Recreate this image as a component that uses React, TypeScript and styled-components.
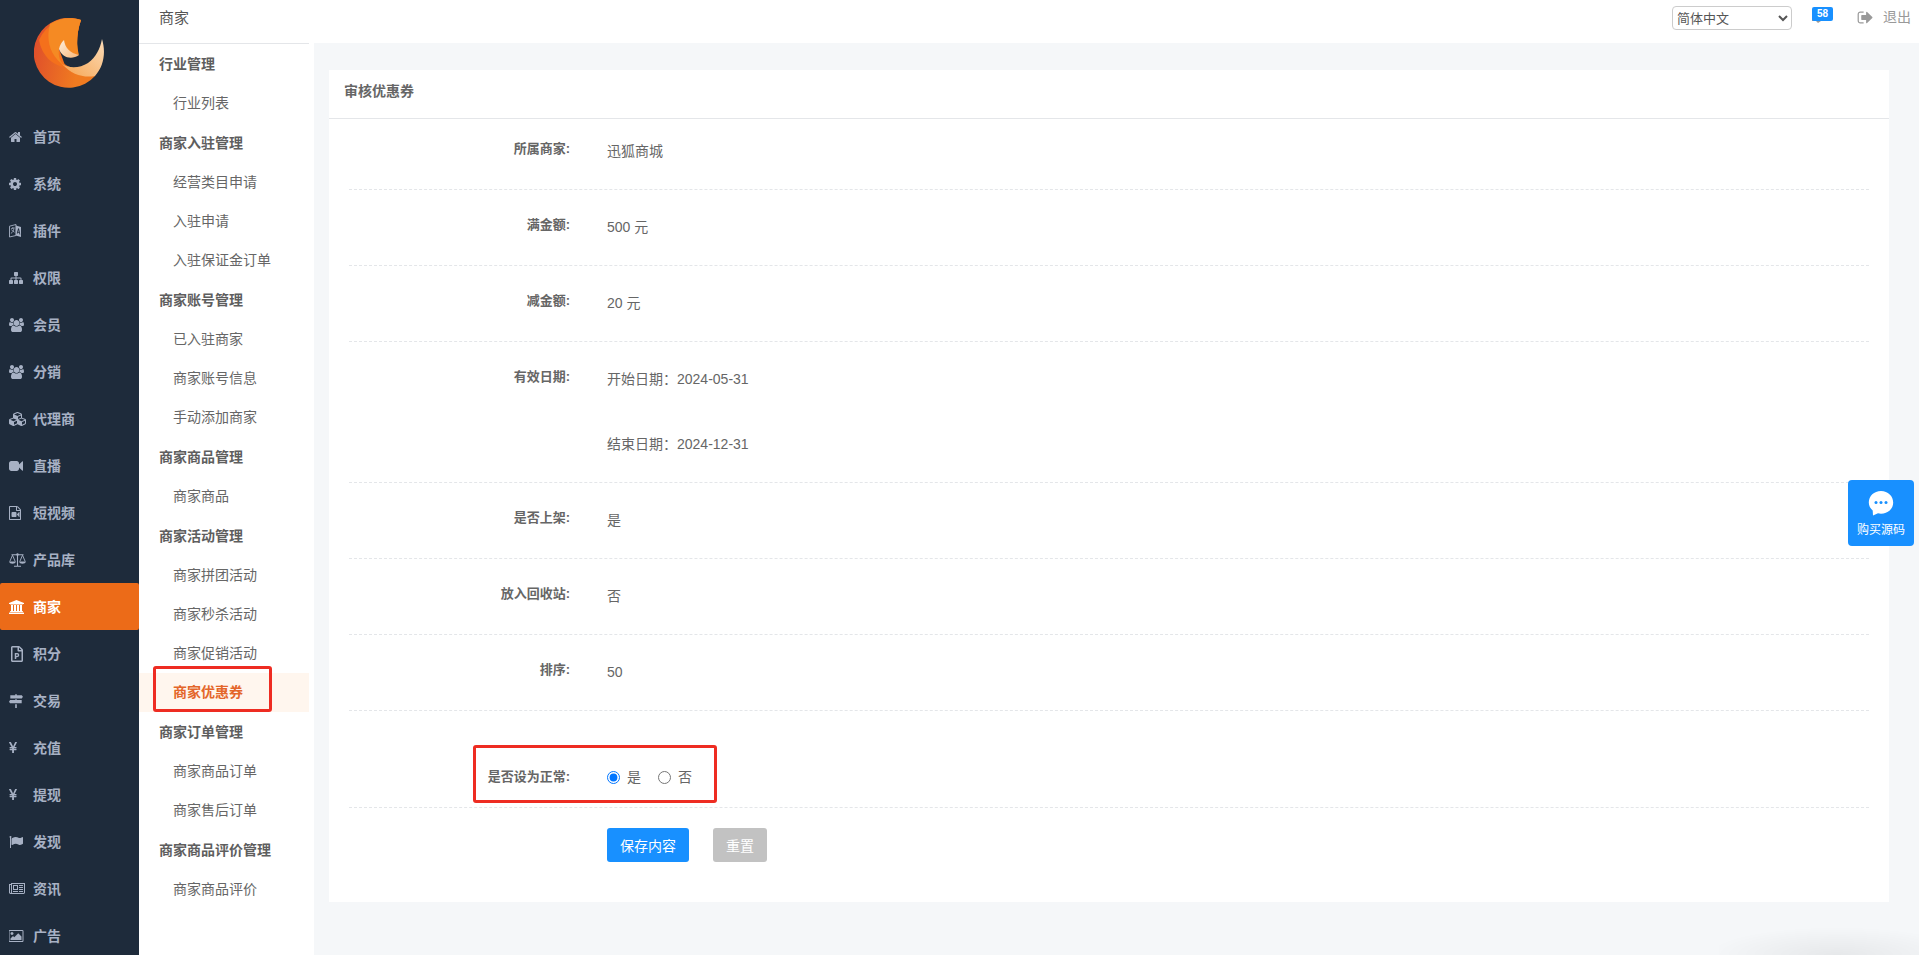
import React from 'react';
import styled, { createGlobalStyle, css } from 'styled-components';
import { FaRegFilePowerpoint } from 'react-icons/fa';

const Global = createGlobalStyle`
  * { box-sizing: border-box; }
  body {
    margin: 0;
    background: #f5f7f9;
    color: #666;
    font: 14px/20px "Liberation Sans", "Noto Sans CJK SC", sans-serif;
  }
  a { color: inherit; text-decoration: none; }
  button, select, input { font-family: inherit; }
`;

const Shell = styled.div`
  display: grid;
  grid-template-columns: 139px 175px minmax(0, 1fr);
  height: 100vh;
  overflow: hidden;
`;

const MainNav = styled.nav`
  background: #1e2b3b;
  overflow: hidden;
`;

const LogoBox = styled.a`
  display: block;
  height: 113px;
  padding: 18px 34px 0;
  svg { display: block; width: 71px; height: 71px; }
`;

const NavLink = styled.a<{ $active?: boolean }>`
  display: flex;
  align-items: center;
  height: 47px;
  padding-left: 9px;
  border-radius: 2px;
  font-weight: bold;
  color: ${p => (p.$active ? '#fff' : '#a7b1c4')};
  background: ${p => (p.$active ? '#ec6b18' : 'transparent')};
`;

const IconSlot = styled.span<{ $tall?: boolean }>`
  display: flex;
  width: 24px;
  svg { display: block; height: ${p => (p.$tall ? 16 : 14)}px; width: auto; fill: currentColor; }
`;

const SubNav = styled.nav`
  background: #fff;
  padding-right: 5px;
  overflow: hidden;
`;

const SubTitle = styled.div`
  height: 44px;
  padding: 8px 20px;
  border-bottom: 1px solid #e4e6e9;
  font-size: 15px;
  color: #555;
`;

const SubGroup = styled.h3`
  margin: 0;
  padding-left: 20px;
  font-size: 14px;
  line-height: 40px;
  color: #5e5e5e;
`;

const SubList = styled.ul`
  margin: 0;
  padding: 0;
  list-style: none;
`;

const SubLink = styled.a<{ $active?: boolean }>`
  display: block;
  position: relative;
  padding-left: 34px;
  line-height: 39px;
  ${p => p.$active && css`
    background: #fff6ee;
    color: #e4662a;
    font-weight: bold;
  `}
`;

const Highlight = styled.span`
  position: absolute;
  inset: -7px 37px 0 14px;
  border: 3px solid #ee2c22;
  border-radius: 3px;
  pointer-events: none;
`;

const Workspace = styled.main`
  display: flex;
  flex-direction: column;
`;

const TopBar = styled.header`
  display: flex;
  align-items: flex-start;
  justify-content: flex-end;
  height: 43px;
  padding: 6px 8px 0 0;
  background: #fff;
`;

const Language = styled.select`
  width: 120px;
  height: 24px;
  border: 1px solid #ccc;
  border-radius: 4px;
  background: #fff;
  color: #555;
  font-size: 13px;
`;

const Messages = styled.a`
  position: relative;
  margin-left: 20px;
  width: 21px;
  height: 22px;
  svg { display: block; width: 14px; height: 14px; margin-top: 4px; fill: #999; }
`;

const Badge = styled.span`
  position: absolute;
  top: 1px;
  left: 0;
  width: 21px;
  border-radius: 2px;
  background: #1890ff;
  color: #fff;
  font-size: 10px;
  font-weight: bold;
  line-height: 14px;
  text-align: center;
`;

const Logout = styled.a`
  display: flex;
  align-items: center;
  gap: 9px;
  margin-left: 24px;
  line-height: 22px;
  color: #999;
  svg { width: 17px; height: 17px; fill: currentColor; }
`;

const Card = styled.section`
  margin: 27px 30px 0 15px;
  padding-bottom: 40px;
  background: #fff;
`;

const CardTitle = styled.h2`
  margin: 0;
  height: 49px;
  padding: 11px 15px;
  border-bottom: 1px solid #e4e6e9;
  font-size: 14px;
  line-height: 20px;
`;

const Form = styled.form`
  padding: 0 20px;
`;

const Row = styled.div<{ $kind?: 'first' | 'choice' }>`
  display: grid;
  grid-template-columns: 221px minmax(0, 1fr);
  column-gap: 37px;
  align-items: start;
  padding: ${p => (p.$kind === 'first' ? '20px 0 28px' : p.$kind === 'choice' ? '56px 0 20px' : '25px 0 28px')};
  border-bottom: 1px dashed #e4e6e9;
`;

const Label = styled.div`
  font-size: 13px;
  font-weight: bold;
  line-height: 20px;
  text-align: right;
`;

const Value = styled.div`
  padding-top: 2px;
  line-height: 20px;
`;

const DateLine = styled.div`
  & + & { margin-top: 45px; }
`;

const Choices = styled.div`
  position: relative;
  display: flex;
  gap: 17px;
`;

const Choice = styled.label`
  display: flex;
  align-items: center;
  gap: 7px;
  line-height: 20px;
  input { width: 13px; height: 13px; margin: 0; accent-color: #0075ff; }
`;

const ChoiceHighlight = styled.span`
  position: absolute;
  inset: -22px auto -16px -134px;
  width: 244px;
  border: 3px solid #ee2c22;
  border-radius: 3px;
  pointer-events: none;
`;

const Actions = styled.div`
  display: flex;
  gap: 24px;
  padding: 20px 0 0 258px;
`;

const Button = styled.button<{ $muted?: boolean }>`
  height: 34px;
  padding: 0 13px;
  border: 0;
  border-radius: 3px;
  background: ${p => (p.$muted ? '#c2c2c2' : '#1890ff')};
  color: #fff;
  font-size: 14px;
`;

const BuyButton = styled.button`
  position: fixed;
  right: 5px;
  top: 480px;
  display: flex;
  flex-direction: column;
  align-items: center;
  gap: 4px;
  width: 66px;
  height: 66px;
  padding: 10px 0 0;
  border: 0;
  border-radius: 4px;
  background: #1890ff;
  color: #fff;
  font-size: 12px;
  line-height: 20px;
  svg { width: 26px; height: 26px; }
`;

const CornerShadow = styled.div`
  position: fixed;
  right: 0;
  bottom: 0;
  width: 200px;
  height: 28px;
  background: radial-gradient(130px 28px at 118px 100%, rgba(0, 0, 0, 0.06), transparent);
  pointer-events: none;
`;

const Glyph = ({ d, box }: { d: string; box: string }) => (
  <svg viewBox={box} aria-hidden="true"><path d={d} /></svg>
);

const home = <Glyph box="64 0 1664 1792" d="M1472 992v480q0 26-19 45t-45 19h-384v-384h-256v384h-384q-26 0-45-19t-19-45v-480q0-1 .5-3t.5-3l575-474 575 474q1 2 1 6zm223-69l-62 74q-8 9-21 11h-3q-13 0-21-7l-692-577-692 577q-12 8-24 7-13-2-21-11l-62-74q-8-10-7-23.5t11-21.5l719-599q32-26 76-26t76 26l244 204v-195q0-14 9-23t23-9h192q14 0 23 9t9 23v408l219 182q10 8 11 21.5t-7 23.5z" />;
const cog = <Glyph box="128 0 1536 1792" d="M1152 896q0-106-75-181t-181-75-181 75-75 181 75 181 181 75 181-75 75-181zm512-109v222q0 12-8 23t-20 13l-185 28q-19 54-39 91 35 50 107 138 10 12 10 25t-9 23q-27 37-99 108t-94 71q-12 0-26-9l-138-108q-44 23-91 38-16 136-29 186-7 28-36 28h-222q-14 0-24.5-8.5t-11.5-21.5l-28-184q-49-16-90-37l-141 107q-10 9-25 9-14 0-25-11-126-114-165-168-7-10-7-23 0-12 8-23 15-21 51-66.5t54-70.5q-27-50-41-99l-183-27q-13-2-21-12.5t-8-23.5v-222q0-12 8-23t19-13l186-28q14-46 39-92-40-57-107-138-10-12-10-24 0-10 9-23 26-36 98.5-107.5t94.5-71.5q13 0 26 10l138 107q44-23 91-38 16-136 29-186 7-28 36-28h222q14 0 24.5 8.500t11.5 21.5l28 184q49 16 90 37l142-107q9-9 24-9 13 0 25 10 129 119 165 170 7 8 7 22 0 12-8 23-15 21-51 66.5t-54 70.5q26 50 41 98l183 28q13 2 21 12.5t8 23.5z" />;
const sitemap = <Glyph box="0 0 1792 1792" d="M1792 1248v320q0 40-28 68t-68 28h-320q-40 0-68-28t-28-68v-320q0-40 28-68t68-28h96v-192h-512v192h96q40 0 68 28t28 68v320q0 40-28 68t-68 28h-320q-40 0-68-28t-28-68v-320q0-40 28-68t68-28h96v-192h-512v192h96q40 0 68 28t28 68v320q0 40-28 68t-68 28h-320q-40 0-68-28t-28-68v-320q0-40 28-68t68-28h96v-192q0-52 38-90t90-38h512v-192h-96q-40 0-68-28t-28-68v-320q0-40 28-68t68-28h320q40 0 68 28t28 68v320q0 40-28 68t-68 28h-96v192h512q52 0 90 38t38 90v192h96q40 0 68 28t28 68z" />;
const users = <Glyph box="64 0 1920 1792" d="M657 896q-162 5-265 128h-134q-82 0-138-40.5t-56-118.5q0-353 124-353 6 0 43.5 21t97.5 42.5 119 21.5q67 0 133-23-5 37-5 66 0 139 81 256zm1071 637q0 120-73 189.5t-194 69.5h-874q-121 0-194-69.5t-73-189.5q0-53 3.5-103.5t14-109 26.5-108.5 43-97.5 62-81 85.5-53.5 111.5-20q10 0 43 21.5t73 48 107 48 135 21.5 135-21.5 107-48 73-48 43-21.5q61 0 111.5 20t85.5 53.5 62 81 43 97.5 26.5 108.5 14 109 3.5 103.5zm-1024-1277q0 106-75 181t-181 75-181-75-75-181 75-181 181-75 181 75 75 181zm704 384q0 159-112.5 271.5t-271.5 112.5-271.5-112.5-112.5-271.5 112.5-271.5 271.5-112.5 271.5 112.5 112.5 271.5zm576 225q0 78-56 118.5t-138 40.5h-134q-103-123-265-128 81-117 81-256 0-29-5-66 66 23 133 23 59 0 119-21.5t97.5-42.5 43.5-21q124 0 124 353zm-128-609q0 106-75 181t-181 75-181-75-75-181 75-181 181-75 181 75 75 181z" />;
const cubes = <Glyph box="0 0 2240 1792" d="M640 1632l384-192v-314l-384 164v342zm-64-454l404-173-404-173-404 173zm1088 454l384-192v-314l-384 164v342zm-64-454l404-173-404-173-404 173zm-448-293l384-165v-266l-384 164v267zm-64-379l441-189-441-189-441 189zm1088 518v416q0 36-19 67t-52 47l-448 224q-25 14-57 14t-57-14l-448-224q-4-2-7-4-2 2-7 4l-448 224q-25 14-57 14t-57-14l-448-224q-33-16-52-47t-19-67v-416q0-38 21.5-70t56.5-48l434-186v-400q0-38 21.5-70t56.5-48l448-192q23-10 50-10t50 10l448 192q35 16 56.5 48t21.5 70v400l434 186q36 16 57 48t21 70z" />;
const video = <Glyph box="0 0 1792 1792" d="M1792 352v1088q0 42-39 59-13 5-25 5-27 0-45-19l-403-403v166q0 119-84.5 203.5t-203.5 84.5h-704q-119 0-203.5-84.5t-84.5-203.5v-704q0-119 84.5-203.5t203.5-84.5h704q119 0 203.5 84.5t84.5 203.5v165l403-402q18-19 45-19 12 0 25 5 39 17 39 59z" />;
const fileVideo = <Glyph box="128 0 1536 1792" d="M1596 380q28 28 48 76t20 88v1152q0 40-28 68t-68 28h-1344q-40 0-68-28t-28-68v-1600q0-40 28-68t68-28h896q40 0 88 20t76 48zm-444-244v376h376q-10-29-22-41l-313-313q-12-12-41-22zm384 1528v-1024h-416q-40 0-68-28t-28-68v-416h-768v1536h1280zm-576-896q52 0 90 38t38 90v384q0 52-38 90t-90 38h-384q-52 0-90-38t-38-90v-384q0-52 38-90t90-38h384zm492 2q20 8 20 30v576q0 22-20 30-8 2-12 2-14 0-23-9l-265-266v-90l265-266q9-9 23-9 4 0 12 2z" />;
const university = <Glyph box="0 0 1920 1792" d="M960 0l960 384v128h-128q0 26-20.5 45t-48.5 19h-1526q-28 0-48.5-19t-20.5-45h-128v-128zm-704 640h256v768h128v-768h256v768h128v-768h256v768h128v-768h256v768h59q28 0 48.5 19t20.5 45v64h-1664v-64q0-26 20.5-45t48.5-19h59v-768zm1595 960q28 0 48.5 19t20.5 45v128h-1920v-128q0-26 20.5-45t48.5-19h1782z" />;
const yen = <Glyph box="382 0 1027 1792" d="M985.5 1536h-172q-13 0-22.5-9t-9.5-23v-330h-288q-13 0-22.5-9t-9.5-23v-103q0-13 9.5-22.5t22.5-9.5h288v-85h-288q-13 0-22.5-9t-9.5-23v-104q0-13 9.5-22.5t22.5-9.5h214l-321-578q-8-16 0-32 10-16 28-16h194q19 0 29 18l215 425q19 38 56 125 10-24 30.5-68t27.5-61l191-420q8-19 29-19h191q17 0 27 16 9 14 1 31l-313 579h215q13 0 22.5 9.5t9.5 22.5v104q0 14-9.5 23t-22.5 9h-290v85h290q13 0 22.5 9.5t9.5 22.5v103q0 14-9.5 23t-22.5 9h-290v330q0 13-9.5 22.5t-22.5 9.5z" />;
const flag = <Glyph box="0 0 1792 1792" d="M320 256q0 72-64 110v1266q0 13-9.5 22.5t-22.5 9.5h-64q-13 0-22.5-9.5t-9.5-22.5v-1266q-64-38-64-110 0-53 37.5-90.5t90.5-37.5 90.5 37.5 37.5 90.5zm1472 64v763q0 25-12.5 38.5t-39.5 27.5q-215 116-369 116-61 0-123.5-22t-108.5-48-115.5-48-142.5-22q-192 0-464 146-17 9-33 9-26 0-45-19t-19-45v-742q0-32 31-55 21-14 79-43 236-120 421-120 107 0 200 29t219 88q38 19 88 19 54 0 117.5-21t110-47 88-47 54.5-21q26 0 45 19t19 45z" />;
const newspaper = <Glyph box="0 0 2048 1792" d="M1024 512h-384v384h384v-384zm128 640v128h-640v-128h640zm0-768v640h-640v-640h640zm640 768v128h-512v-128h512zm0-256v128h-512v-128h512zm0-256v128h-512v-128h512zm0-256v128h-512v-128h512zm-1536 960v-960h-128v960q0 26 19 45t45 19 45-19 19-45zm1664 0v-1088h-1536v1088q0 33-11 64h1483q26 0 45-19t19-45zm128-1216v1216q0 80-56 136t-136 56h-1664q-80 0-136-56t-56-136v-1088h256v-128h1792z" />;
const picture = <Glyph box="0 0 1920 1792" d="M576 576q0 80-56 136t-136 56-136-56-56-136 56-136 136-56 136 56 56 136zm1024 384v448h-1408v-192l320-320 160 160 512-512zm96-704h-1600q-13 0-22.5 9.5t-9.5 22.5v1216q0 13 9.5 22.5t22.5 9.5h1600q13 0 22.5-9.5t9.5-22.5v-1216q0-13-9.5-22.5t-22.5-9.5zm160 32v1216q0 66-47 113t-113 47h-1600q-66 0-113-47t-47-113v-1216q0-66 47-113t113-47h1600q66 0 113 47t47 113z" />;
const signOut = <Glyph box="0 0 1792 1792" d="M704 1440q0 4 1 20t.5 26.5-3 23.5-10 19.5-20.5 6.5h-320q-119 0-203.5-84.5t-84.5-203.5v-704q0-119 84.5-203.5t203.5-84.5h320q13 0 22.5 9.5t9.5 22.5q0 4 1 20t.5 26.5-3 23.5-10 19.5-20.5 6.5h-320q-66 0-113 47t-47 113v704q0 66 47 113t113 47h312l11.5 1 11.5 3 8 5.5 7 9 2 13.5zm928-544q0 26-19 45l-544 544q-19 19-45 19t-45-19-19-45v-288h-448q-26 0-45-19t-19-45v-384q0-26 19-45t45-19h448v-288q0-26 19-45t45-19 45 19l544 544q19 19 19 45z" />;
const signs = <Glyph box="0 0 14 14" d="M6.2.2h1.6v1h5l1.1 1.6-1.1 1.6H1.3V1.2h4.9zM6.2 5.2h1.6v.9h4.9v3.2H1.1L0 7.7l1.1-1.6h5.1zM6.2 10.2h1.6V14H6.2z" />;
const scale = (
  <svg viewBox="0 0 17 14" aria-hidden="true">
    <path d="M8.5 1v12M2.5 1.8h12M5 13.3h7" fill="none" stroke="currentColor" strokeWidth="1.1" />
    <path d="M3.5 2.2L.8 8.5M3.5 2.2l2.7 6.3M13.5 2.2l-2.7 6.3M13.5 2.2l2.7 6.3" fill="none" stroke="currentColor" strokeWidth=".9" />
    <path d="M.2 8.4h6.6c0 3-6.6 3-6.6 0zM10.2 8.4h6.6c0 3-6.6 3-6.6 0z" />
    <circle cx="8.5" cy="1.4" r="1.2" />
  </svg>
);
const language = (
  <svg viewBox="0 0 12 14" aria-hidden="true">
    <path d="M.5 2.2L7 .5v11L.5 13z" fill="none" stroke="currentColor" strokeWidth=".9" />
    <path d="M2 4.8l3.6-1M3.8 3v1.4M5 4.3C4.6 7 3.4 8.6 1.9 9.4M2.5 5.6c.8 1.2 1.8 2.2 3 2.6" fill="none" stroke="currentColor" strokeWidth=".8" />
    <path fillRule="evenodd" d="M6.8 1.5L12 3v10l-5.2-1.6zM9.2 4.2L7.7 9.6l.8.2.4-1.3 1.3.4.3 1.5.8.2-1.3-6.1zm.4 1.8l.4 1.9-.9-.3z" />
  </svg>
);

const Logo = () => (
  <svg viewBox="0 0 71 71" aria-hidden="true">
    <defs>
      <linearGradient id="body" x1="0" y1=".4" x2="1" y2=".6">
        <stop offset="0" stopColor="#df4f2b" />
        <stop offset=".75" stopColor="#f07b20" />
      </linearGradient>
      <linearGradient id="tail" x1="1" y1="0" x2="0" y2="1">
        <stop offset="0" stopColor="#fbdcb8" />
        <stop offset="1" stopColor="#f6a451" />
      </linearGradient>
      <linearGradient id="flick" x1="0" y1="0" x2="1" y2="1">
        <stop offset="0" stopColor="#fdeedd" />
        <stop offset="1" stopColor="#f8b878" />
      </linearGradient>
    </defs>
    <path fill="url(#body)" d="M47 2A35 35 0 1 0 61 58L36 49C27 46 24 39 25 31L44 37C42 26 43 13 47 2z" />
    <path fill="#f4701c" d="M47 2A35 35 0 0 0 5 22C8 38 18 47 32 50L25 31 44 37C42 26 43 13 47 2z" />
    <path fill="#f58a23" d="M47 2C36-1 25 0 16 6C12 22 15 38 32 49C26 45 24 38 25 31L45 37C42 26 43 13 47 2z" />
    <path fill="url(#tail)" d="M68 21C72 34 70 48 61 58C50 60 38 57 28 46C36 51 46 50 54 45C62 39 66 31 68 21z" />
    <path fill="url(#flick)" d="M30 22C31 30 36 35 45 37C38 42 28 40 25 31C26 27 27 25 30 22z" />
  </svg>
);

const menu: [string, React.ReactNode][] = [
  ['首页', home], ['系统', cog], ['插件', language], ['权限', sitemap], ['会员', users],
  ['分销', users], ['代理商', cubes], ['直播', video], ['短视频', fileVideo], ['产品库', scale],
  ['商家', university], ['积分', <FaRegFilePowerpoint />], ['交易', signs], ['充值', yen],
  ['提现', yen], ['发现', flag], ['资讯', newspaper], ['广告', picture],
];

const groups: [string, string[]][] = [
  ['行业管理', ['行业列表']],
  ['商家入驻管理', ['经营类目申请', '入驻申请', '入驻保证金订单']],
  ['商家账号管理', ['已入驻商家', '商家账号信息', '手动添加商家']],
  ['商家商品管理', ['商家商品']],
  ['商家活动管理', ['商家拼团活动', '商家秒杀活动', '商家促销活动', '商家优惠券']],
  ['商家订单管理', ['商家商品订单', '商家售后订单']],
  ['商家商品评价管理', ['商家商品评价']],
];

const fields: [string, string[]][] = [
  ['所属商家', ['迅狐商城']],
  ['满金额', ['500 元']],
  ['减金额', ['20 元']],
  ['有效日期', ['开始日期：2024-05-31', '结束日期：2024-12-31']],
  ['是否上架', ['是']],
  ['放入回收站', ['否']],
  ['排序', ['50']],
];

export default function App() {
  return (
    <>
      <Global />
      <Shell>
        <MainNav aria-label="主菜单">
          <LogoBox href="#" aria-label="首页"><Logo /></LogoBox>
          {menu.map(([name, icon]) => (
            <NavLink key={name} href="#" $active={name === '商家'}>
              <IconSlot $tall={name === '积分'}>{icon}</IconSlot>{name}
            </NavLink>
          ))}
        </MainNav>

        <SubNav aria-label="商家">
          <SubTitle>商家</SubTitle>
          {groups.map(([title, items]) => (
            <React.Fragment key={title}>
              <SubGroup>{title}</SubGroup>
              <SubList>
                {items.map(item => {
                  const active = item === '商家优惠券';
                  return (
                    <li key={item}>
                      <SubLink href="#" $active={active}>{item}{active && <Highlight />}</SubLink>
                    </li>
                  );
                })}
              </SubList>
            </React.Fragment>
          ))}
        </SubNav>

        <Workspace>
          <TopBar>
            <Language aria-label="语言" defaultValue="zh">
              <option value="zh">简体中文</option>
            </Language>
            <Messages href="#" aria-label="消息">
              <svg viewBox="0 0 14 14" aria-hidden="true"><path d="M0 1h14v10H9l-3 2-2-2H0z" /></svg>
              <Badge>58</Badge>
            </Messages>
            <Logout href="#">{signOut}退出</Logout>
          </TopBar>

          <Card>
            <CardTitle>审核优惠券</CardTitle>
            <Form onSubmit={e => e.preventDefault()}>
              {fields.map(([label, lines], i) => (
                <Row key={label} $kind={i === 0 ? 'first' : undefined}>
                  <Label>{label}:</Label>
                  <Value>{lines.map(line => <DateLine key={line}>{line}</DateLine>)}</Value>
                </Row>
              ))}
              <Row $kind="choice">
                <Label id="normal">是否设为正常:</Label>
                <Choices role="radiogroup" aria-labelledby="normal">
                  <Choice><input type="radio" name="normal" defaultChecked />是</Choice>
                  <Choice><input type="radio" name="normal" />否</Choice>
                  <ChoiceHighlight />
                </Choices>
              </Row>
              <Actions>
                <Button type="submit">保存内容</Button>
                <Button type="reset" $muted>重置</Button>
              </Actions>
            </Form>
          </Card>
        </Workspace>
      </Shell>

      <CornerShadow />
      <BuyButton type="button">
        <svg viewBox="0 0 26 26" aria-hidden="true">
          <path fill="#fff" d="M13 1C6 1 .8 6 .8 12.5c0 3.2 1.5 6 3.9 8L5 25.5l5-2.2c1 .2 2 .4 3 .4 7 0 12.2-4.9 12.2-11.2S20 1 13 1z" />
          <g fill="#1890ff"><circle cx="8" cy="12.5" r="1.5" /><circle cx="13" cy="12.5" r="1.5" /><circle cx="18" cy="12.5" r="1.5" /></g>
        </svg>
        购买源码
      </BuyButton>
    </>
  );
}
